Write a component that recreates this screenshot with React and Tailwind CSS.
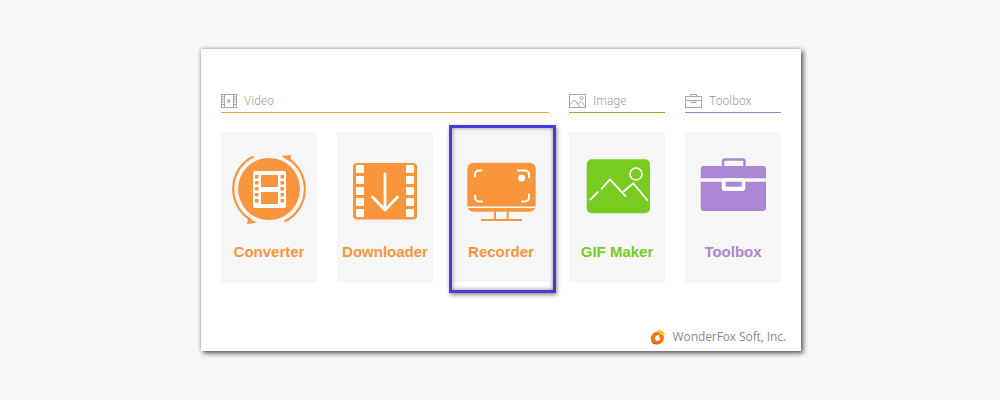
const ORANGE = "#f9953c";
const GREEN = "#78cc1f";
const PURPLE = "#ab86d2";

const FilmIcon = () => (
  <svg width="16" height="14" viewBox="0 0 16 14" fill="none" stroke="#a8a8a8" strokeWidth="1">
    <rect x="0.5" y="0.5" width="15" height="13" />
    <path d="M3.500 .5v13M12.500 .5v13M.5 3h3M.5 5.500h3M.5 8h3M.5 10.500h3M12.500 3h3M12.500 5.500h3M12.500 8h3M12.500 10.500h3" />
    <path d="M6.500 4.500v5l3.500-2.500z" fill="#a8a8a8" stroke="none" />
  </svg>
);

const ImageIcon = () => (
  <svg width="17" height="14" viewBox="0 0 17 14" fill="none" stroke="#a8a8a8" strokeWidth="1">
    <rect x="0.5" y="0.5" width="16" height="13" />
    <path d="M.5 11l5-5 6 7.500M9 10l3-2.500 4.500 5" />
    <circle cx="12.500" cy="4" r="1.500" />
  </svg>
);

const CaseIcon = () => (
  <svg width="17" height="14" viewBox="0 0 17 14" fill="none" stroke="#a8a8a8" strokeWidth="1">
    <rect x="0.5" y="2.500" width="16" height="11" />
    <path d="M.5 6.500h16M5.500 2.500V.5h6v2M6 6.500v2h5v-2" />
  </svg>
);

const ConverterIcon = () => (
  <svg width="96" height="104" viewBox="0 0 96 104">
    <circle cx="48" cy="57" r="31" fill={ORANGE} />
    <path d="M32.500 24.500A36 36 0 0 0 30 88" fill="none" stroke={ORANGE} strokeWidth="2.200" />
    <path d="M63.500 89.500A36 36 0 0 0 66 26" fill="none" stroke={ORANGE} strokeWidth="2.200" />
    <path d="M36 91l-9-5.500-1 6.500z M60 24l9 5.500 1-6.500z" fill={ORANGE} />
    <rect x="32" y="39" width="33" height="37" rx="2" fill="#fff" />
    <rect x="40" y="43" width="17" height="12" fill={ORANGE} />
    <rect x="40" y="60" width="17" height="12" fill={ORANGE} />
    {[43, 49, 55, 61, 67].map((y) => (
      <g key={y} fill={ORANGE}>
        <rect x="34" y={y} width="3.500" height="3.500" />
        <rect x="59.500" y={y} width="3.500" height="3.500" />
      </g>
    ))}
  </svg>
);

const DownloaderIcon = () => (
  <svg width="96" height="104" viewBox="0 0 96 104">
    <rect x="16" y="31" width="64" height="56.500" rx="4" fill={ORANGE} />
    {[33, 44, 55, 66, 77].map((y) => (
      <g key={y} fill="#fff">
        <rect x="19" y={y} width="8" height="8" rx="1" />
        <rect x="69" y={y} width="8" height="8" rx="1" />
      </g>
    ))}
    <path d="M48 42v36M35.500 65l12.500 13 12.500-13" fill="none" stroke="#fff" strokeWidth="2.800" strokeLinecap="round" strokeLinejoin="round" />
  </svg>
);

const RecorderIcon = () => (
  <svg width="96" height="104" viewBox="0 0 96 104">
    <rect x="14.300" y="30.700" width="68.400" height="49" rx="6" fill={ORANGE} />
    <rect x="14.300" y="74.500" width="68.400" height="1.600" fill="#fff" />
    <path d="M42 80v7M54.700 80v7" stroke={ORANGE} strokeWidth="2" />
    <path d="M28 88h41" stroke={ORANGE} strokeWidth="2" />
    <g fill="none" stroke="#fff" strokeWidth="2" strokeLinecap="round">
      <path d="M22 44.500v-2a4 4 0 0 1 4-4h2.500" />
      <path d="M22 63.500v2a4 4 0 0 0 4 4h3" />
      <path d="M65 38.500h7a4 4 0 0 1 4 4v3" />
      <path d="M76 62.500v3a4 4 0 0 1-4 4h-3" />
    </g>
    <circle cx="68.700" cy="46" r="3.500" fill="#fff" />
  </svg>
);

const GifIcon = () => (
  <svg width="96" height="104" viewBox="0 0 96 104">
    <rect x="17.700" y="27.300" width="63.300" height="54" rx="5" fill={GREEN} />
    <circle cx="67" cy="42" r="6" fill="none" stroke="#fff" strokeWidth="1.600" />
    <path d="M21 68l8.300-8.300M32 57.300l9-10 16 17.400M54.300 59.700l10-8.400 14.400 17.400" fill="none" stroke="#fff" strokeWidth="1.800" />
  </svg>
);

const ToolboxIcon = () => (
  <svg width="96" height="104" viewBox="0 0 96 104">
    <path d="M38 35v-5.500a2 2 0 0 1 2-2h17.500a2 2 0 0 1 2 2V35" fill="none" stroke={PURPLE} strokeWidth="2.500" />
    <path d="M19 34h59a3 3 0 0 1 3 3v9.300H15.700V37a3 3 0 0 1 3-3z" fill={PURPLE} />
    <path d="M15.700 49.700H81V76a3 3 0 0 1-3 3H18.700a3 3 0 0 1-3-3z" fill={PURPLE} />
    <rect x="36.700" y="46" width="23.600" height="13" rx="3" fill="#fff" />
    <rect x="40.700" y="49.700" width="16" height="5" fill={PURPLE} />
  </svg>
);

const FoxLogo = () => (
  <svg width="16" height="16" viewBox="0 0 16 16">
    <circle cx="7.500" cy="9" r="6.500" fill="#ee7a1d" />
    <path d="M7 1.500c3-1.500 7 .5 8 3.500-1.500 1-3.500 1.500-5 .5z" fill="#f9c22e" />
    <path d="M5 9.500c0-2 1.500-3.500 4-3.500-.5 1.500 1 2 1 3.500 0 1.500-1.200 2.500-2.500 2.500S5 11 5 9.500z" fill="#fff" />
    <path d="M1 8c0 4 3 7 7.500 7C4 16.500 0 13 1 8z" fill="#b93a0c" />
  </svg>
);

const SectionHead = ({ icon, label, children }) => (
  <div className="flex flex-col">
    <div className="flex items-center gap-[7px] h-[20px] pb-[3px]">
      {icon}
      <span className="text-[12px] font-light tracking-[0.1px] text-[#a0a0a0]">{label}</span>
    </div>
    {children}
  </div>
);

const Card = ({ icon, label, color, highlight }) => (
  <div className="relative w-24 h-[150px] bg-[#f6f6f7] flex flex-col items-center">
    {icon}
    <span className="mt-[7px] text-[15px] leading-[18px] font-bold font-['Liberation_Sans',sans-serif]" style={{ color }}>
      {label}
    </span>
    {highlight && (
      <div className="absolute -left-1 -top-[7px] -right-[7px] -bottom-[11px] border-[3px] border-[#4a3bd8] shadow-[1px_2px_4px_rgba(0,0,0,0.45),inset_0_0_5px_rgba(0,0,0,0.45)]" />
    )}
  </div>
);

export default function App() {
  return (
    <div className="w-[1000px] h-[400px] bg-[#f7f7f7] pl-[201px] pt-[49px] overflow-hidden font-['Roboto',sans-serif]">
      <div className="w-[600px] h-[302px] bg-white shadow-[2px_2px_5px_rgba(0,0,0,0.7),-1px_-1px_3px_rgba(0,0,0,0.12)] flex flex-col px-5 pt-[43px]">
        <div className="flex gap-5">
          <div className="w-[328px] flex flex-col gap-[19px]">
            <SectionHead icon={<FilmIcon />} label="Video">
              <div className="h-px bg-[#eca52c]" />
            </SectionHead>
            <div className="flex gap-5">
              <Card icon={<ConverterIcon />} label="Converter" color={ORANGE} />
              <Card icon={<DownloaderIcon />} label="Downloader" color={ORANGE} />
              <Card icon={<RecorderIcon />} label="Recorder" color={ORANGE} highlight />
            </div>
          </div>
          <div className="w-24 flex flex-col gap-[19px]">
            <SectionHead icon={<ImageIcon />} label="Image">
              <div className="h-px bg-[#7dbb22]" />
            </SectionHead>
            <Card icon={<GifIcon />} label="GIF Maker" color={GREEN} />
          </div>
          <div className="w-24 flex flex-col gap-[19px]">
            <SectionHead icon={<CaseIcon />} label="Toolbox">
              <div className="h-px bg-[#a77fcc]" />
            </SectionHead>
            <Card icon={<ToolboxIcon />} label="Toolbox" color={PURPLE} />
          </div>
        </div>
        <div className="mt-auto mb-[5px] -mr-[5px] flex items-center justify-end gap-[7px]">
          <FoxLogo />
          <span className="text-[12px] tracking-[-0.1px] font-['Open_Sans',sans-serif] text-[#8a8a8a]">WonderFox Soft, Inc.</span>
        </div>
      </div>
    </div>
  );
}
